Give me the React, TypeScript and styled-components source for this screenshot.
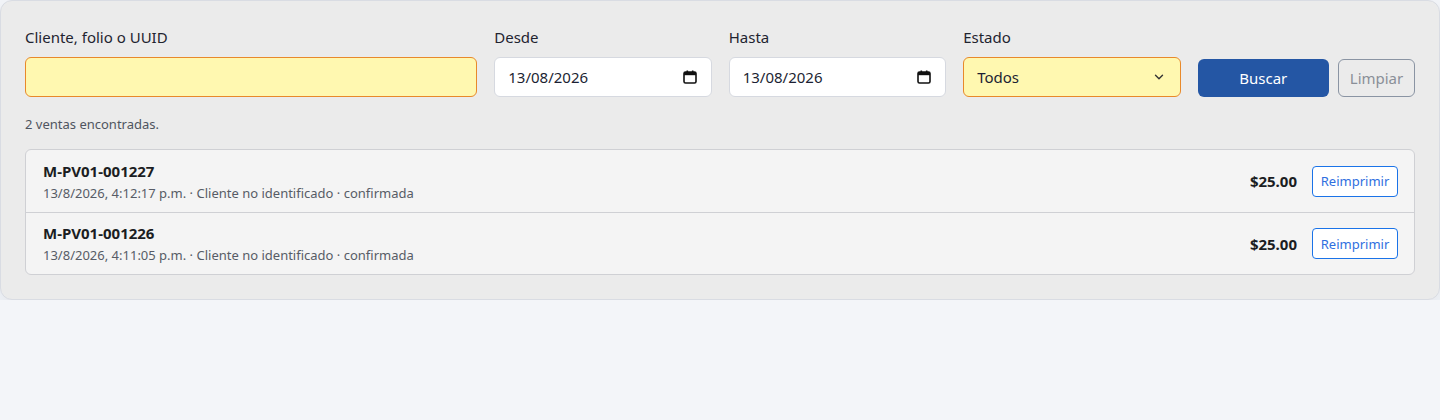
import styled, { createGlobalStyle } from "styled-components";

const GlobalStyle = createGlobalStyle`
  * { box-sizing: border-box; }
  body {
    margin: 0;
    background: #f3f5f9;
    font-family: "Segoe UI", "Noto Sans", "Liberation Sans", sans-serif;
    color: #1f2430;
  }
`;

const Card = styled.div`
  background: #ebebeb;
  border: 1px solid #d9dce3;
  border-radius: 12px;
  padding: 26px 24px 24px 24px;
  box-shadow: 0 10px 24px rgba(30, 40, 70, 0.08);
`;

const Filters = styled.div`
  display: grid;
  grid-template-columns: 2.08fr repeat(4, 1fr);
  gap: 17px;
  align-items: end;
`;

const Field = styled.div`
  display: flex;
  flex-direction: column;
  gap: 10px;
`;

const Label = styled.span`
  font-size: 15px;
  line-height: 20px;
  color: #1f2430;
`;

const Input = styled.input`
  height: 40px;
  width: 100%;
  padding: 0 12px;
  font: inherit;
  font-size: 15px;
  color: #1f2430;
  border-radius: 6px;
  border: 1px solid #e8892b;
  background: #fff8b0;
  outline: none;
`;

const Box = styled.div<{ $highlight?: boolean }>`
  height: 40px;
  border-radius: 6px;
  border: 1px solid ${({ $highlight }) => ($highlight ? "#e8892b" : "#d6d9e0")};
  background: ${({ $highlight }) => ($highlight ? "#fff8b0" : "#ffffff")};
  display: flex;
  align-items: center;
  justify-content: space-between;
  padding: 0 ${({ $highlight }) => ($highlight ? "14px 0 13px" : "14px 0 13px")};
  font-size: 15px;
  color: #1c1f33;
`;

const Actions = styled.div`
  display: flex;
  gap: 9px;
`;

const PrimaryButton = styled.button`
  flex: 1;
  height: 38px;
  border: none;
  border-radius: 6px;
  background: #2456a4;
  color: #ffffff;
  font: inherit;
  font-size: 15px;
`;

const GhostButton = styled.button`
  width: 77px;
  height: 38px;
  border: 1px solid #8a94a3;
  border-radius: 6px;
  background: transparent;
  color: #8a8f98;
  font: inherit;
  font-size: 15px;
`;

const Count = styled.p`
  margin: 18px 0 16px;
  font-size: 13px;
  line-height: 18px;
  color: #4f5560;
`;

const List = styled.div`
  border: 1px solid #cfd0d4;
  border-radius: 6px;
  background: #f4f4f4;
  overflow: hidden;
`;

const Row = styled.div`
  display: flex;
  align-items: center;
  height: 62px;
  padding: 0 16px 0 17px;
  & + & {
    border-top: 1px solid #cfd0d4;
  }
`;

const RowInfo = styled.div`
  flex: 1;
  display: flex;
  flex-direction: column;
  gap: 3px;
`;

const Folio = styled.div`
  font-size: 15px;
  font-weight: 700;
  line-height: 20px;
  color: #1b1d22;
`;

const Meta = styled.div`
  font-size: 13px;
  line-height: 18px;
  color: #575c66;
`;

const Price = styled.div`
  font-size: 15px;
  font-weight: 700;
  color: #1b1d22;
  margin-right: 15px;
`;

const OutlineButton = styled.button`
  height: 31px;
  width: 86px;
  padding: 0;
  border: 1px solid #1a73e8;
  border-radius: 4px;
  background: #ffffff;
  color: #2f6fe0;
  font: inherit;
  font-size: 13px;
`;

const sales = [
  { folio: "M-PV01-001227", time: "13/8/2026, 4:12:17 p.m.", total: "$25.00" },
  { folio: "M-PV01-001226", time: "13/8/2026, 4:11:05 p.m.", total: "$25.00" },
];

const Chevron = () => (
  <svg width="14" height="14" viewBox="0 0 24 24" fill="none" stroke="#333" strokeWidth="2.4" strokeLinecap="round" strokeLinejoin="round">
    <path d="M6 9l6 6 6-6" />
  </svg>
);

const CalendarIcon = () => (
  <svg width="14" height="14" viewBox="0 0 14 14">
    <rect x="1" y="2" width="12" height="11" rx="1.5" fill="none" stroke="#111" strokeWidth="1.6" />
    <rect x="1" y="2" width="12" height="3.2" fill="#111" />
    <rect x="3.5" y="0.5" width="1.6" height="2.5" fill="#111" />
    <rect x="8.9" y="0.5" width="1.6" height="2.5" fill="#111" />
  </svg>
);

export default function App() {
  return (
    <>
      <GlobalStyle />
      <Card>
        <Filters>
          <Field>
            <Label>Cliente, folio o UUID</Label>
            <Input />
          </Field>
          <Field>
            <Label>Desde</Label>
            <Box>
              <span>13/08/2026</span>
              <CalendarIcon />
            </Box>
          </Field>
          <Field>
            <Label>Hasta</Label>
            <Box>
              <span>13/08/2026</span>
              <CalendarIcon />
            </Box>
          </Field>
          <Field>
            <Label>Estado</Label>
            <Box $highlight>
              <span>Todos</span>
              <Chevron />
            </Box>
          </Field>
          <Actions>
            <PrimaryButton>Buscar</PrimaryButton>
            <GhostButton>Limpiar</GhostButton>
          </Actions>
        </Filters>
        <Count>2 ventas encontradas.</Count>
        <List>
          {sales.map((s) => (
            <Row key={s.folio}>
              <RowInfo>
                <Folio>{s.folio}</Folio>
                <Meta>{s.time} · Cliente no identificado · confirmada</Meta>
              </RowInfo>
              <Price>{s.total}</Price>
              <OutlineButton>Reimprimir</OutlineButton>
            </Row>
          ))}
        </List>
      </Card>
    </>
  );
}
